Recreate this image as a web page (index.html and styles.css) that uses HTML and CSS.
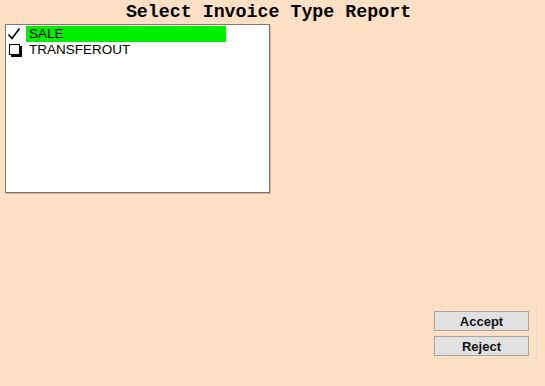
FILE: index.html
```html
<!DOCTYPE html>
<html lang="en">
<head>
  <meta charset="UTF-8" />
  <title>Select Invoice Type Report</title>
  <link rel="stylesheet" href="styles.css">
</head>
<body>
  <div class="frame">
    <h1 class="title">Select Invoice Type Report</h1>

    <!-- invoice type list -->
    <div class="list">
      <div class="item">
        <span class="mark">
          <svg width="14" height="14" viewBox="0 0 14 14"><path d="M1.5 7.5 L5 11.5 L12.5 1.5" fill="none" stroke="#000" stroke-width="1.6"/></svg>
        </span>
        <span class="label selected">SALE</span>
      </div>
      <div class="item">
        <span class="mark"><span class="box"></span></span>
        <span class="label">TRANSFEROUT</span>
      </div>
    </div>

    <!-- actions -->
    <div class="actions">
      <button class="btn">Accept</button>
      <button class="btn">Reject</button>
    </div>
  </div>
</body>
</html>
```

FILE: styles.css
```css
html, body {
  margin: 0;
  height: 100%;
  background: #ffe0c4;
}
.frame {
  width: 537px;
  height: 386px;
  display: flex;
  flex-direction: column;
}
.title {
  margin: 0;
  padding-top: 3px;
  height: 21px;
  font-family: "Liberation Mono", "Courier New", monospace;
  font-weight: bold;
  font-size: 18.3px;
  line-height: 18px;
  text-align: center;
  color: #000;
}
.list {
  margin-left: 5px;
  width: 263px;
  height: 166px;
  background: #fff;
  border: 1px solid #857664;
  box-shadow: 1px 1px 0 #c9b9a6;
  padding-top: 1px;
  box-sizing: content-box;
}
.item {
  display: flex;
  align-items: center;
  height: 16px;
}
.mark {
  width: 16px;
  height: 16px;
  display: flex;
  align-items: center;
  justify-content: center;
}
.box {
  width: 9px;
  height: 9px;
  border: 1px solid #000;
  box-shadow: 2px 2px 0 #000;
  margin: 0 1px 1px 1px;
}
.label {
  font-family: "Liberation Sans", Arial, sans-serif;
  font-size: 13.5px;
  line-height: 16px;
  color: #000;
  padding-left: 3px;
  margin-left: 4px;
}
.selected {
  background: #00ee00;
  width: 197px;
  height: 16px;
}
.actions {
  margin-top: auto;
  margin-bottom: 26px;
  align-self: flex-end;
  width: 113px;
  height: 59px;
  border: 1px solid #f8e6d4;
  box-shadow: inset -1px -1px 0 #f3d6bc;
  padding: 9px 0 0 8px;
  box-sizing: border-box;
  display: flex;
  flex-direction: column;
  gap: 5px;
  margin-right: -1px;
}
.btn {
  width: 95px;
  height: 20px;
  padding: 0;
  background: #e1e1e1;
  border: 1px solid #a9a49e;
  font-family: "Liberation Sans", Arial, sans-serif;
  font-weight: bold;
  font-size: 13px;
  color: #111;
}
```
